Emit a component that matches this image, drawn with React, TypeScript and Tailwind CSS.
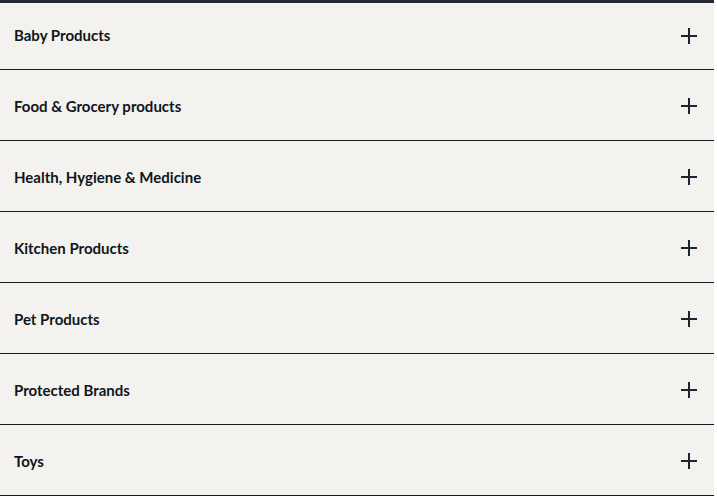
// Category accordion list

const CATEGORIES = [
  'Baby Products',
  'Food & Grocery products',
  'Health, Hygiene & Medicine',
  'Kitchen Products',
  'Pet Products',
  'Protected Brands',
  'Toys',
];

function PlusIcon() {
  return (
    <svg width="16" height="16" viewBox="0 0 16 16" fill="none">
      <path d="M8 0v16M0 8h16" stroke="#1c2430" strokeWidth="2" />
    </svg>
  );
}

export default function App() {
  return (
    <div className="min-h-screen bg-white" style={{ fontFamily: 'Lato, "Open Sans", sans-serif' }}>
      <div className="w-[714px] bg-[#f3f2ee] shadow-[inset_0_3px_0_#232a36]">
        {CATEGORIES.map((name) => (
          <div
            key={name}
            className="h-[71px] pt-[2px] first:h-[70px] flex items-center justify-between pl-[14px] pr-[17px] border-b border-[#141a22]"
          >
            <span className="text-[15px] font-bold text-[#0f1620]">{name}</span>
            <PlusIcon />
          </div>
        ))}
      </div>
    </div>
  );
}
